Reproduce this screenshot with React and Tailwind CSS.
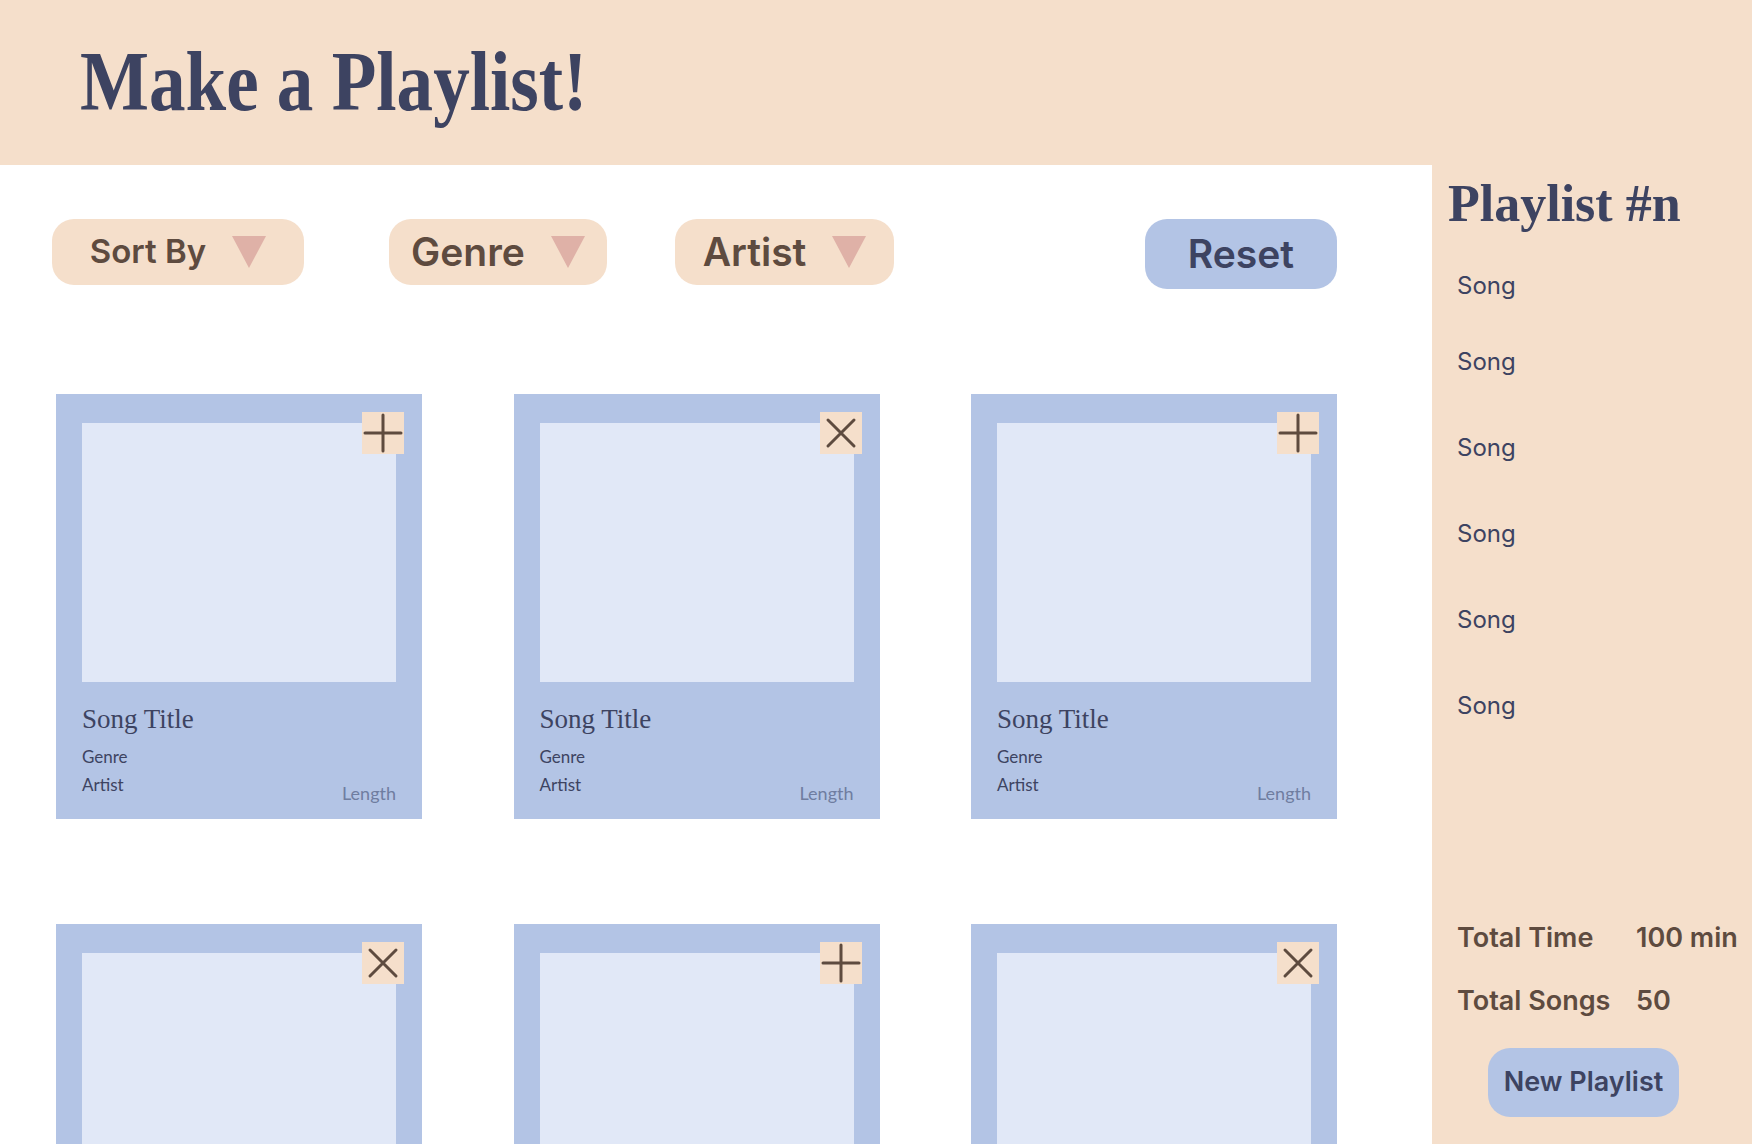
const songs = [
  { id: 1, added: false },
  { id: 2, added: true },
  { id: 3, added: false },
  { id: 4, added: true },
  { id: 5, added: false },
  { id: 6, added: true },
];

function PlusIcon() {
  return (
    <svg viewBox="0 0 42 42" className="h-full w-full">
      <path d="M21 3v36M3 21h36" stroke="#5E4B3F" strokeWidth="3" strokeLinecap="round" fill="none" />
    </svg>
  );
}

function CrossIcon() {
  return (
    <svg viewBox="0 0 42 42" className="h-full w-full">
      <path d="M8 8l26 26M34 8L8 34" stroke="#5E4B3F" strokeWidth="3" strokeLinecap="round" fill="none" />
    </svg>
  );
}

function Triangle() {
  return (
    <svg viewBox="0 0 34 32" className="h-[32px] w-[34px] shrink-0">
      <path d="M0 0h34L17 32z" fill="#DFB1A7" />
    </svg>
  );
}

function FilterPill({ label, width, size }) {
  return (
    <button className={`flex h-[66px] items-center justify-center gap-[26px] rounded-[22px] bg-[#F5DFCB] font-semibold text-[#5E4B3F] ${width} ${size}`}>
      <span>{label}</span>
      <Triangle />
    </button>
  );
}

function SongCard({ added }) {
  return (
    <div className="relative flex h-[425px] w-[366px] flex-col bg-[#B3C4E5] px-[26px] pt-[29px]">
      <div className="h-[259px] w-full shrink-0 bg-[#E1E8F7]" />
      <button className="absolute top-[18px] right-[18px] h-[42px] w-[42px] bg-[#F5DFCB]">
        {added ? <CrossIcon /> : <PlusIcon />}
      </button>
      <div className="mt-[22px] font-['Liberation_Serif',serif] text-[27px] leading-[30px] text-[#3D4361]">Song Title</div>
      <div className="mt-[11px] font-['Lato',sans-serif] text-[17px] leading-[24px] text-[#3D4361]">Genre</div>
      <div className="mt-[4px] flex items-start justify-between font-['Lato',sans-serif] text-[17px] leading-[24px]">
        <span className="text-[#3D4361]">Artist</span>
        <span className="pt-[8px] text-[18px] text-[#6F7DA0]">Length</span>
      </div>
    </div>
  );
}

export default function App() {
  return (
    <div className="flex h-[1144px] w-[1752px] flex-col overflow-hidden bg-white font-['Inter',sans-serif]">
      <header className="flex h-[165px] shrink-0 items-center bg-[#F5DFCB] pl-[80px]">
        <h1 className="origin-left scale-x-[0.87] pb-[2px] font-['Liberation_Serif',serif] text-[84px] font-bold leading-none text-[#3D4361]">
          Make a Playlist!
        </h1>
      </header>

      <div className="flex min-h-0 flex-1">
        <main className="flex-1 pt-[54px] pr-[95px] pl-[52px]">
          <div className="flex items-start">
            <FilterPill label="Sort By" width="w-[252px]" size="text-[33px]" />
            <div className="ml-[85px]">
              <FilterPill label="Genre" width="w-[218px]" size="text-[39px]" />
            </div>
            <div className="ml-[68px]">
              <FilterPill label="Artist" width="w-[219px]" size="text-[39px]" />
            </div>
            <button className="ml-auto h-[70px] w-[192px] rounded-[22px] bg-[#B3C4E5] text-[39px] font-semibold text-[#3D4361]">
              Reset
            </button>
          </div>

          <div className="mt-[105px] grid grid-cols-[366px_366px_366px] justify-between gap-y-[105px] pl-[4px]">
            {songs.map((s) => (
              <SongCard key={s.id} added={s.added} />
            ))}
          </div>
        </main>

        <aside className="flex w-[320px] shrink-0 flex-col bg-[#F5DFCB] pb-[27px]">
          <h2 className="pt-[10px] pl-[16px] font-['Liberation_Serif',serif] text-[52px] font-bold leading-[57px] text-[#3D4361]">
            Playlist #n
          </h2>
          <ul className="pl-[25px] text-[24px] leading-[30px] text-[#3D4361]">
            <li className="mt-[39px]">Song</li>
            <li className="mt-[46px]">Song</li>
            <li className="mt-[56px]">Song</li>
            <li className="mt-[56px]">Song</li>
            <li className="mt-[56px]">Song</li>
            <li className="mt-[56px]">Song</li>
          </ul>

          <div className="mt-auto pl-[25px] text-[27px] font-semibold leading-[34px] text-[#5E4B3F]">
            <div className="grid grid-cols-[179px_1fr] whitespace-nowrap">
              <span>Total Time</span>
              <span>100 min</span>
            </div>
            <div className="mt-[29px] grid grid-cols-[179px_1fr] whitespace-nowrap">
              <span>Total Songs</span>
              <span>50</span>
            </div>
          </div>
          <button className="mt-[30px] ml-[56px] h-[69px] w-[191px] rounded-[22px] bg-[#B3C4E5] text-[27px] font-semibold text-[#3D4361]">
            New Playlist
          </button>
        </aside>
      </div>
    </div>
  );
}
